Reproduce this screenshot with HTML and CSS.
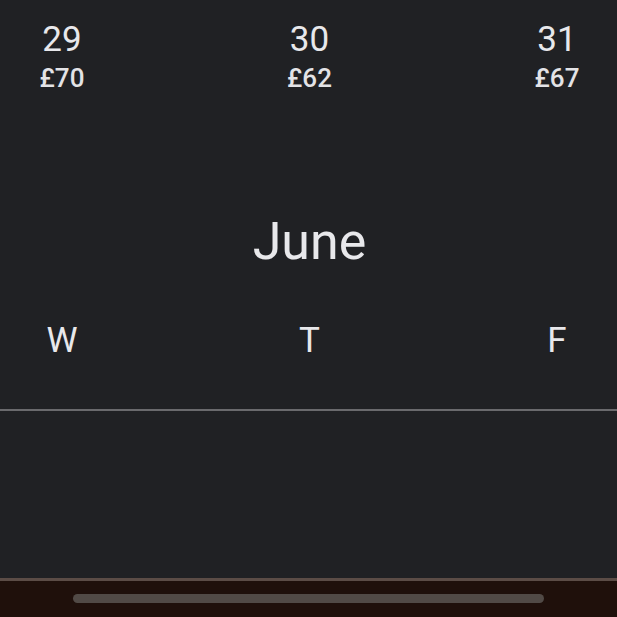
FILE: index.html
```html
<!DOCTYPE html>
<html lang="en">
<head>
<meta charset="utf-8">
<title>Calendar</title>
<link rel="stylesheet" href="styles.css">
</head>
<body>
<div class="screen">
  <main class="content">
    <div class="row dates">
      <div class="cell"><div class="day">29</div><div class="price">£70</div></div>
      <div class="cell"><div class="day">30</div><div class="price">£62</div></div>
      <div class="cell"><div class="day">31</div><div class="price">£67</div></div>
    </div>
    <h2 class="month">June</h2>
    <div class="row weekdays">
      <div class="cell wd">W</div>
      <div class="cell wd">T</div>
      <div class="cell wd">F</div>
    </div>
    <hr class="divider">
  </main>
  <footer class="navbar">
    <div class="handle"></div>
  </footer>
</div>
</body>
</html>
```

FILE: styles.css
```css
html, body {
  margin: 0;
  padding: 0;
}
body {
  background: #202124;
  font-family: Roboto, "Liberation Sans", sans-serif;
  color: #e8e8eb;
}
.screen {
  height: 617px;
  display: flex;
  flex-direction: column;
}
.content {
  flex: 1;
  padding-top: 20px;
  display: flex;
  flex-direction: column;
}
.row {
  display: flex;
  justify-content: space-between;
  padding-left: 2px;
}
.cell {
  width: 120px;
  text-align: center;
}
.day {
  font-size: 35px;
  line-height: 40px;
  font-weight: 400;
}
.price {
  margin-top: 3px;
  font-size: 26px;
  line-height: 30px;
  font-weight: 500;
  color: #e3e3e6;
}
.month {
  margin: 119px 0 0;
  font-size: 52px;
  line-height: 60px;
  font-weight: 400;
  text-align: center;
  transform: translateX(1px);
}
.weekdays {
  margin-top: 49px;
}
.wd {
  font-size: 35px;
  line-height: 40px;
}
.divider {
  margin: 48px 0 0;
  border: 0;
  height: 2px;
  background: #6a6a6d;
}
.navbar {
  height: 36px;
  border-top: 3px solid #5b4c46;
  background: #1f100b;
  display: flex;
  justify-content: center;
}
.handle {
  margin-top: 13px;
  width: 471px;
  height: 9px;
  border-radius: 5px;
  background: #514a46;
}
```
